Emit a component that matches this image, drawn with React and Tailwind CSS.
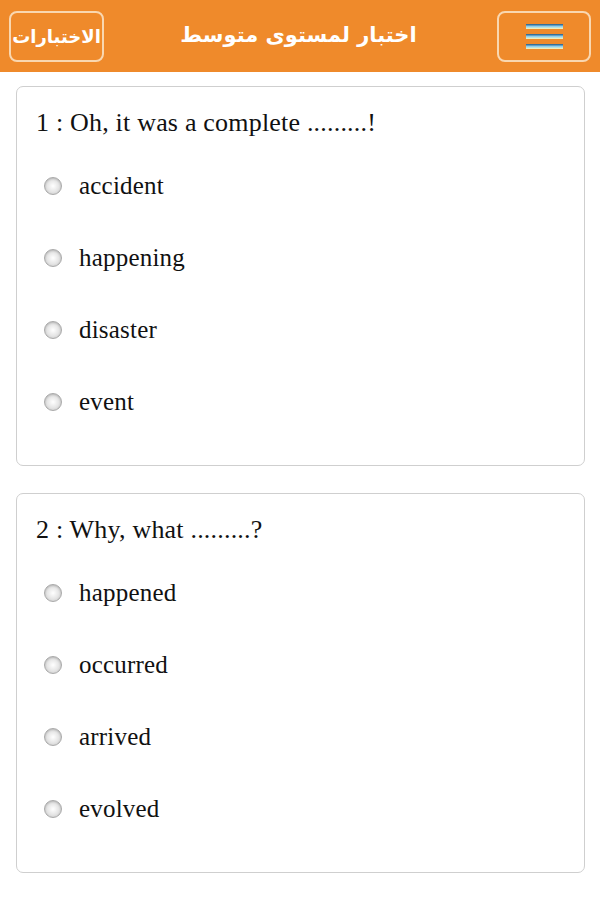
import React from "react";

const questions = [
  {
    n: 1,
    text: "Oh, it was a complete .........!",
    options: ["accident", "happening", "disaster", "event"],
  },
  {
    n: 2,
    text: "Why, what .........?",
    options: ["happened", "occurred", "arrived", "evolved"],
  },
];

function Radio() {
  return (
    <span className="inline-block shrink-0 w-[18px] h-[18px] rounded-full border border-[#a9a9a9] bg-radial from-[#ffffff] via-[#e6e6e6] to-[#c4c4c4] shadow-[inset_0_1px_2px_rgba(0,0,0,0.15)]" />
  );
}

function MenuIcon() {
  return (
    <div className="flex flex-col gap-[5px]">
      {[0, 1, 2].map((i) => (
        <div
          key={i}
          className="w-[37px] h-[5px] bg-linear-to-b from-[#1f5a86] via-[#8fd0ee] to-[#fff3b0]"
        />
      ))}
    </div>
  );
}

function QuestionCard({ q }) {
  return (
    <div className="border border-[#cfcfcf] rounded-[7px] bg-white pt-[22px] pb-[27px] px-[19px]">
      <p className="text-[26px] leading-[28px] text-[#111] mb-[13px] tracking-[0.2px]">
        {q.n} : {q.text}
      </p>
      {q.options.map((o) => (
        <label key={o} className="flex items-center h-[72px] pl-[8px]">
          <Radio />
          <span className="ml-[17px] text-[25px] text-[#111] tracking-[0.2px]">{o}</span>
        </label>
      ))}
    </div>
  );
}

export default function App() {
  return (
    <div className="w-[600px] min-h-[900px] bg-white font-['Liberation_Serif',serif]">
      <header className="h-[72px] bg-[#ef8a2b] flex items-center justify-between px-[9px] font-['DejaVu_Sans',sans-serif]">
        <button className="w-[95px] h-[51px] border-2 border-[#f9d7b0] rounded-[8px] text-white font-bold text-[18px] flex items-center justify-center whitespace-nowrap" dir="rtl">
          الاختبارات
        </button>
        <h1 className="text-white font-bold text-[21px] -ml-[4px]" dir="rtl">
          اختبار لمستوى متوسط
        </h1>
        <button className="w-[94px] h-[51px] border-2 border-[#f9d7b0] rounded-[8px] flex items-center justify-center">
          <MenuIcon />
        </button>
      </header>
      <main className="px-[16px] pt-[14px] flex flex-col gap-[27px] pr-[15px]">
        {questions.map((q) => (
          <QuestionCard key={q.n} q={q} />
        ))}
      </main>
    </div>
  );
}
